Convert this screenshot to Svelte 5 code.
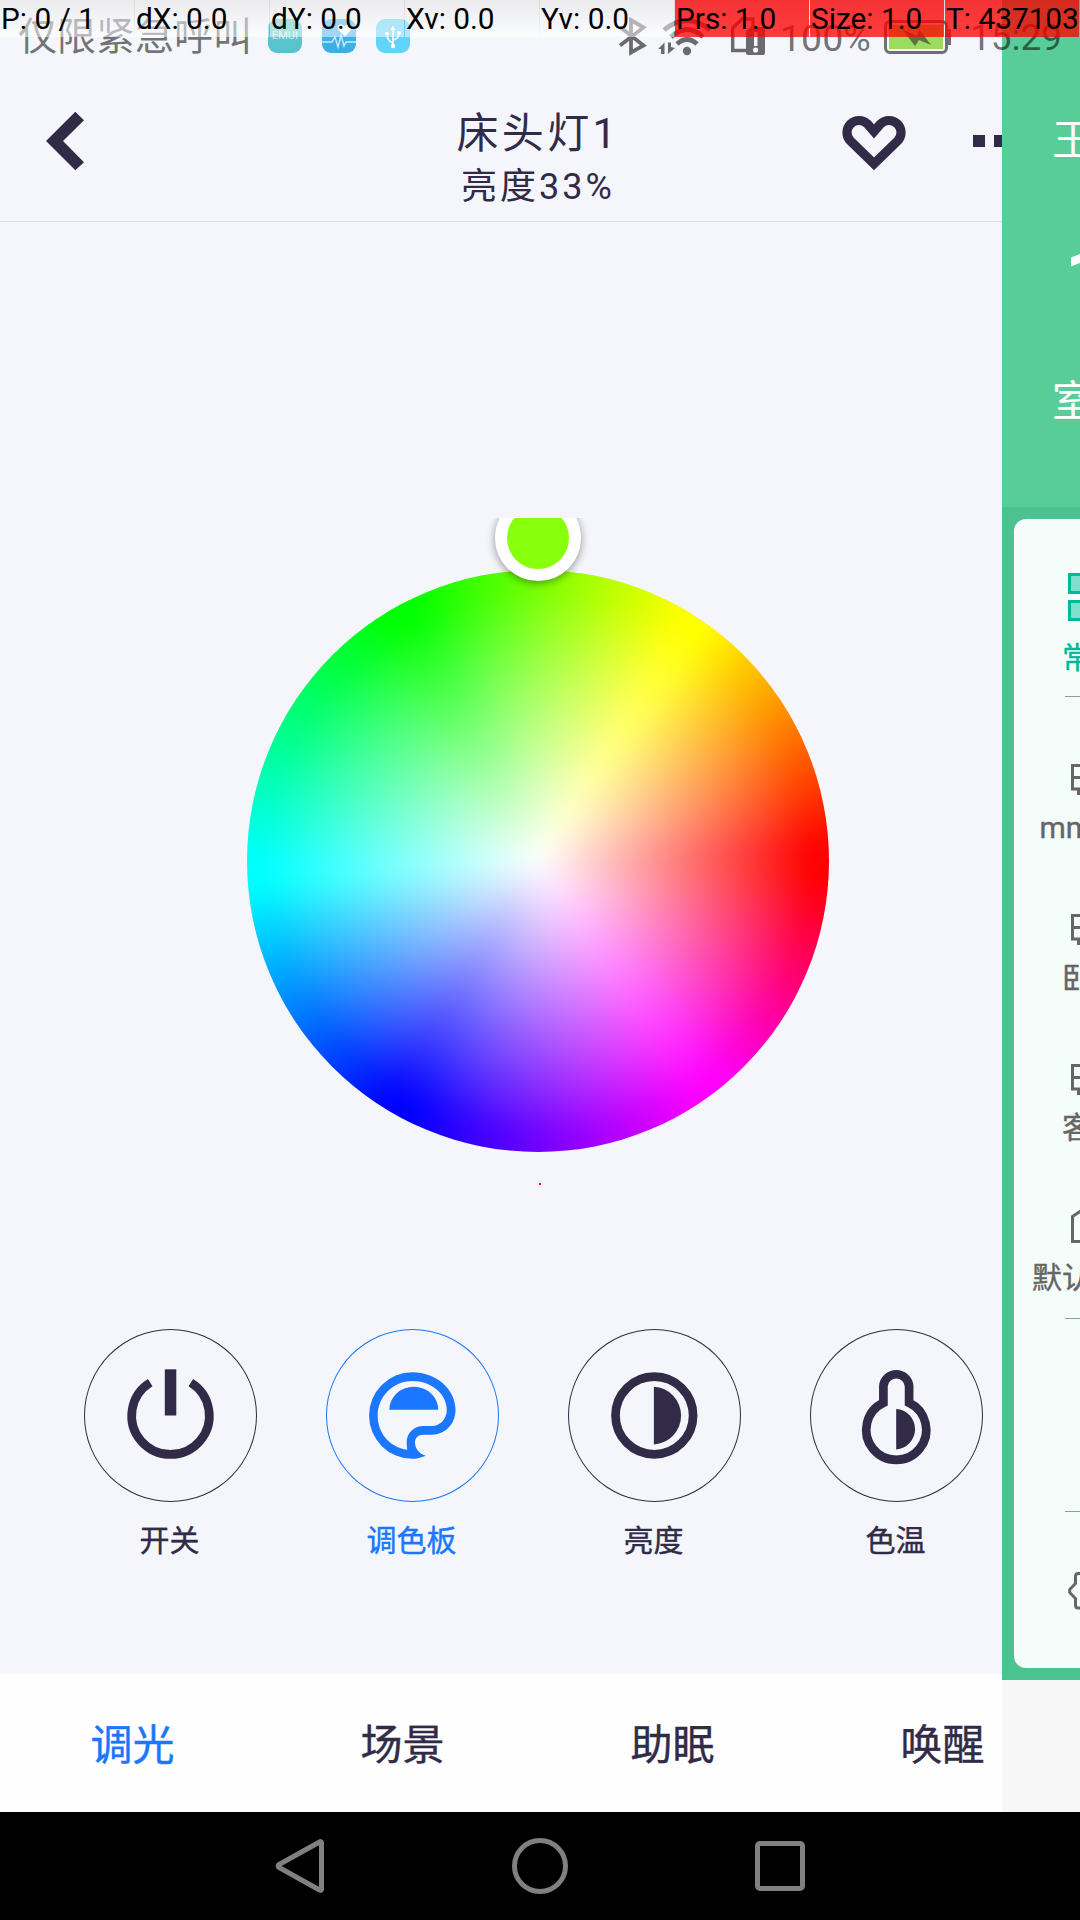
<script>
  const pointer = [
    { text: 'P: 0 / 1' },
    { text: 'dX: 0.0' },
    { text: 'dY: 0.0' },
    { text: 'Xv: 0.0' },
    { text: 'Yv: 0.0' },
    { text: 'Prs: 1.0', full: true },
    { text: 'Size: 1.0', full: true },
    { text: 'T: 437103', full: true }
  ];
  const controls = [
    { id: 'power', label: '开关' },
    { id: 'palette', label: '调色板', active: true },
    { id: 'brightness', label: '亮度' },
    { id: 'temperature', label: '色温' }
  ];
  const tabs = ['调光', '场景', '助眠', '唤醒'];
  const rooms = ['mmmm', '卧室', '客厅'];
</script>

<div class="device">
  <div class="screen">
    <main class="page">
      <header class="header">
        <svg class="back" width="38" height="60" viewBox="0 0 38 60"><path d="M0 30 29.3 .7 38 9.2 17 30 38 51.3 29.3 59.3Z" fill="#312b48" /></svg>
        <div class="titles">
          <h1>床头灯1</h1>
          <p>亮度33%</p>
        </div>
        <svg class="heart" width="64" height="56" viewBox="842 115 64 56"><path d="M874 131.5 867.5 124A12 12 0 0 0 850.5 141L874 163.8 897.5 141A12 12 0 0 0 880.5 124Z" fill="none" stroke="#312b48" stroke-width="9.2" /></svg>
        <div class="more"><i></i><i></i><i></i></div>
      </header>

      <section class="picker">
        <div class="wheel"><div class="hues"></div></div>
        <div class="knob"></div>
        <div class="dot"></div>
      </section>

      <section class="controls">
        {#each controls as c}
          <div class="control" class:active={c.active}>
            <div class="ring">
              <svg width="173" height="173" viewBox="0 0 173 173">
                {#if c.id === 'power'}
                  <path class="line" d="M66.2 53.6A38.8 38.8 0 1 0 106.8 53.6" />
                  <path class="solid" d="M80.8 40.3H92.3V86.5H80.8Z" />
                {:else if c.id === 'palette'}
                  <path class="solid" fill-rule="evenodd" d="M99.7 126.7C95 128.8 90.5 129.8 86.3 129.8A43.2 43.2 0 0 1 86.3 43.3C110 43.3 129.5 60 129.5 81C129.5 95 119 105.7 106 105.7H97C92 105.7 89 109 89 113.5C89 119 93 125 99.7 126.7ZM81.3 120.8C63.5 118 51.7 104 51.7 86.7C51.7 67.6 67 52 86.3 52C105.5 52 120.8 65 120.8 81C120.8 90 114 97 106 97H97C88 97 80.7 104 80.7 113C80.7 116 81 118.5 81.3 120.8Z" />
                  <path class="solid" d="M63.3 80.7A24.5 23 0 0 1 112.3 80.7Z" />
                {:else if c.id === 'brightness'}
                  <circle class="line" cx="86.3" cy="86.5" r="38.8" />
                  <path class="solid" d="M85.9 57.7A28.9 28.9 0 0 1 85.9 115.4Z" />
                {:else}
                  <path class="line" d="M73.4 74.3V57.5A12.9 12.9 0 0 1 99.1 57.5V74.3A30 30 0 1 1 73.4 74.3Z" transform="translate(0 -.5)" />
                  <path class="solid" d="M86.2 79.9A20.3 20.3 0 0 1 86.2 120.4Z" />
                {/if}
              </svg>
            </div>
            <span>{c.label}</span>
          </div>
        {/each}
      </section>

      <nav class="tabs">
        {#each tabs as tab, i}
          <span class:on={i === 0}>{tab}</span>
        {/each}
      </nav>
    </main>

    <aside class="home">
      <div class="weather">
        <span class="city">王</span>
        <span class="temp">1</span>
        <span class="indoor">室</span>
      </div>
      <div class="board">
        <div class="card">
          <div class="room first">
            <svg width="48" height="48" viewBox="0 0 48 48"><g fill="#7fdecd" stroke="#00b99a" stroke-width="3"><path d="M1.5 1.5H19.5V19.5H1.5ZM28.5 1.5H46.5V19.5H28.5ZM1.5 28.5H19.5V46.5H1.5ZM28.5 28.5H46.5V46.5H28.5Z" /></g></svg>
            <b>常用</b>
          </div>
          <hr />
          <div class="rooms">
            {#each rooms as room}
              <div class="room">
                <svg width="42" height="42" viewBox="0 0 42 42"><path d="M1.5 6.5H40.5V30H1.5ZM1.5 18.5H40.5M7.5 30V36M34.5 30V36" fill="none" stroke="#666" stroke-width="3" /></svg>
                <b>{room}</b>
              </div>
            {/each}
            <div class="room">
              <svg class="house" width="42" height="42" viewBox="0 0 42 42"><path d="M1.5 7.5 21 -5.5 40.5 7.5V32.5H1.5Z" fill="none" stroke="#666" stroke-width="3" /></svg>
              <b>默认房间</b>
            </div>
          </div>
          <hr />
          <div class="spacer"></div>
          <hr />
          <svg class="gear" width="48" height="38" viewBox="0 0 48 38"><path d="M24 1.5H10Q7.5 1.5 7.5 4.5V11.5L1.7 17.5V20.5L7.5 26.5V33Q7.5 36 10 36H24" fill="none" stroke="#666" stroke-width="3" /></svg>
        </div>
      </div>
      <div class="blank"></div>
    </aside>
  </div>

  <div class="navbar">
    <svg width="50" height="56" viewBox="0 0 50 56"><path d="M46.5 4.5V51.5Q46 53 44.5 52L4 29.5Q2.2 28 4 26.5L44.5 4Q46 3 46.5 4.5Z" /></svg>
    <svg width="56" height="56" viewBox="0 0 56 56"><circle cx="28" cy="28" r="25.5" /></svg>
    <svg width="50" height="50" viewBox="0 0 50 50"><rect x="2.5" y="2.5" width="45" height="45" rx="2.5" /></svg>
  </div>

  <div class="status">
    <span class="carrier">仅限紧急呼叫</span>
    <div class="apps">
      <span class="app emui">EMUI</span>
      <svg class="app" width="34" height="34" viewBox="0 0 34 34">
        <defs><linearGradient id="blue" x2="0" y2="1"><stop stop-color="#42b3f0" /><stop offset="1" stop-color="#3caee4" /></linearGradient></defs>
        <rect width="34" height="34" rx="9" fill="url(#blue)" />
        <path d="M23 17.5 16.5 11C13.5 7 18.5 3 22.5 7.5C26.5 3 32 7 28.5 11.5Z" fill="#fff" />
        <path d="M0 23H10L13 18 16 28 19 16.5 22 27 24 23H34" fill="none" stroke="#cdeafa" stroke-width="1.4" />
      </svg>
      <svg class="app" width="34" height="34" viewBox="0 0 34 34">
        <rect width="34" height="34" rx="9" fill="#62d4fa" />
        <g fill="none" stroke="#fff" stroke-width="1.5"><path d="M17 27V8M17 24Q11 22 11 15M17 21Q23 20 23 14" /></g>
        <g fill="#fff"><path d="M14.5 11 17 6.5 19.5 11Z" /><circle cx="17" cy="27" r="2.2" /><circle cx="11" cy="14.5" r="1.8" /><path d="M21.3 12.3H24.7V15.7H21.3Z" /></g>
      </svg>
    </div>
    <svg class="radios" width="150" height="40" viewBox="617 17 150 40">
      <g fill="none" stroke="#000" stroke-width="3.8">
        <path d="M620 27 643.5 45.5 631 52.5V20L643.5 27.5 620 45.5" />
        <path d="M664 30Q687 11 710 30" stroke-width="4.6" />
        <path d="M671 37Q687 22 703 37" stroke-width="4.8" />
        <path d="M677 44Q687 35 697 44" stroke-width="5" />
        <path d="M746 50.5H732.7V28L742 19H753V29" stroke-width="3.4" />
      </g>
      <circle cx="687" cy="51" r="4.2" />
      <path d="M658 49 664.5 42.5V54H661V49ZM668 42.5H671V47L675 48 668 54Z" />
      <path fill-rule="evenodd" d="M746 31 751 27H763Q765 27 765 29V53Q765 55 763 55H748Q746 55 746 53ZM754 32V46H757.5V32ZM753 50A2.6 2.6 0 1 0 758.2 50A2.6 2.6 0 1 0 753 50Z" />
    </svg>
    <span class="pct">100%</span>
    <svg class="battery" width="68" height="34" viewBox="0 0 68 34">
      <rect x="1.5" y="1.5" width="61" height="31" rx="4.5" fill="#f5f6fc" stroke="#6f6f6f" stroke-width="3" />
      <path d="M64 9H67V25H64Z" fill="#6f6f6f" />
      <rect x="5" y="5" width="54" height="24" fill="#9bdb5d" />
      <path d="M18 9 33 16 35 9 47 25 35 20 31 26Z" fill="#5d7046" />
    </svg>
    <span class="clock">15:29</span>
  </div>

  <div class="pointer">
    {#each pointer as p}
      <span class:full={p.full}>{p.text}</span>
    {/each}
  </div>
</div>

<style>
  :global(body) { margin: 0; background: #000; }
  .device {
    position: relative;
    width: 1080px;
    height: 1920px;
    overflow: hidden;
    font-family: Roboto, 'Noto Sans CJK SC', sans-serif;
    color: #312b48;
  }
  .screen { display: flex; height: 1812px; }
  .page { width: 1002px; overflow: hidden; background: #f5f6fc; display: flex; flex-direction: column; }

  .header {
    box-sizing: border-box;
    width: 1080px;
    height: 222px;
    flex: none;
    padding: 60px 0 0 46px;
    display: flex;
    align-items: center;
    border-bottom: 1px solid #dcdde3;
  }
  .back { flex: none; }
  .titles { width: 758px; margin: 39px -77px 0 77px; text-align: center; }
  .titles h1 { margin: 0; font-size: 42px; line-height: 54px; font-weight: 400; letter-spacing: 3.4px; padding-right: 4px; }
  .titles p { margin: 0; font-size: 36px; line-height: 52px; letter-spacing: 3px; padding-right: 4px; }
  .heart { flex: none; margin-top: 4px; }
  .more { display: flex; gap: 9px; margin-left: 67px; }
  .more i { width: 12px; height: 12px; background: #312b48; }

  .picker {
    position: relative;
    flex: none;
    width: 686px;
    height: 686px;
    margin: 296px 0 0 195px;
    overflow: hidden;
    display: flex;
    align-items: center;
    justify-content: center;
  }
  .wheel { width: 582px; height: 582px; border-radius: 50%; overflow: hidden; }
  /* Larger than the wheel, so that the softened edge falls outside the clip */
  .hues {
    width: 662px;
    height: 662px;
    margin: -40px;
    filter: blur(11px);
    background:
      radial-gradient(circle 291px, #fff 0%, rgba(255, 255, 255, 0) 94%),
      conic-gradient(from 90deg, #f00 0deg 3deg, #f0f 51deg 56deg, #00f 117deg 122deg, #0ff 175deg 180deg, #0f0 239deg 244deg, #ff0 300deg 306deg, #f00 357deg);
  }
  .knob {
    position: absolute;
    left: 300px;
    top: -23px;
    box-sizing: border-box;
    width: 86px;
    height: 86px;
    border: 12px solid #fff;
    border-radius: 50%;
    background: #88ff0b;
    box-shadow: 0 2px 9px rgba(0, 0, 0, 0.42);
  }
  .dot { position: absolute; left: 344px; top: 665px; width: 2px; height: 2px; background: #f00; }

  .controls { display: flex; gap: 69px; margin: 125px 0 0 84px; width: 996px; flex: none; }
  .control { width: 173px; flex: none; text-align: center; color: #312b48; }
  .control.active { color: #1b77ff; }
  .control span { display: block; margin-top: 17px; padding-right: 2px; font-size: 30px; line-height: 44px; -webkit-text-stroke: 0.4px currentColor; }
  .ring { width: 173px; height: 173px; border-radius: 50%; box-shadow: inset 0 0 0 1px currentColor; }
  .ring svg { display: block; }
  .line { fill: none; stroke: currentColor; stroke-width: 8.7; }
  .solid { fill: currentColor; }

  .tabs { box-sizing: border-box; margin-top: auto; width: 1080px; height: 138px; padding-top: 5px; flex: none; background: #fefefe; display: flex; align-items: center; }
  .tabs span { box-sizing: border-box; width: 270px; padding-right: 5px; text-align: center; font-size: 42px; line-height: 60px; -webkit-text-stroke: 0.4px currentColor; }
  .tabs .on { color: #1b77ff; }

  .home { width: 78px; overflow: hidden; color: #fff; }
  .weather { box-sizing: border-box; height: 507px; padding: 111px 0 0 50px; background: #59cd97; display: flex; flex-direction: column; }
  .weather span { font-size: 42px; line-height: 60px; white-space: nowrap; }
  .weather .temp { font-size: 108px; line-height: 120px; margin: 56px 0 25px 10px; }
  .board { box-sizing: border-box; width: 180px; height: 1173px; padding: 12px; background: #4dc291; }
  .card { width: 156px; height: 1149px; border-radius: 12px; background: #f5fdfa; display: flex; flex-direction: column; align-items: center; color: #666; }
  .blank { height: 132px; background: #f7f7f7; }
  .room { display: flex; flex-direction: column; align-items: center; height: 150px; }
  .room svg { flex: none; }
  .room .house { overflow: visible; }
  .room b { font-weight: 400; font-size: 30px; line-height: 44px; margin-top: 5px; white-space: nowrap; -webkit-text-stroke: 0.4px currentColor; }
  .room.first { height: 123px; padding-top: 54px; color: #00b99a; }
  .room.first b { margin-top: 15px; }
  hr { width: 54px; height: 1px; border: 0; margin: 0; background: #999; flex: none; }
  .rooms { padding-top: 62px; height: 559px; flex: none; }
  .spacer { height: 192px; flex: none; }
  .gear { margin-top: 60px; flex: none; }

  .navbar { height: 108px; background: #000; display: flex; align-items: center; padding-left: 275px; }
  .navbar svg { fill: none; stroke: #808080; stroke-width: 5; margin-right: 187px; }

  .status { position: absolute; inset: 0 0 auto 0; height: 74px; display: flex; align-items: center; }
  .carrier { margin-left: 18px; width: 250px; font-size: 39px; line-height: 60px; color: rgba(0, 0, 0, 0.54); white-space: nowrap; }
  .apps { display: flex; gap: 20px; width: 349px; margin-top: -2px; }
  .app { width: 34px; height: 34px; flex: none; }
  .emui {
    border-radius: 9px;
    background: linear-gradient(#5accc8, #58c0cf);
    color: #fff;
    font: 300 11px/34px Roboto, sans-serif;
    text-align: center;
  }
  .radios { fill: #000; opacity: 0.56; flex: none; }
  .pct { margin-left: 13px; width: 104px; font-size: 37.5px; color: rgba(0, 0, 0, 0.54); flex: none; margin-top: 1px; }
  .battery { flex: none; }
  .clock { margin-left: 18px; font-size: 37px; color: rgba(0, 0, 0, 0.54); margin-top: 1px; }

  .pointer {
    position: absolute;
    inset: 0 0 auto 0;
    height: 37px;
    display: flex;
    color: #000;
    background: linear-gradient(rgba(0, 0, 0, 0.13), rgba(0, 0, 0, 0) 34px);
  }
  .pointer span {
    box-sizing: border-box;
    width: 135px;
    height: 37px;
    padding-left: 1px;
    border-right: 1px solid transparent;
    background: rgba(255, 255, 255, 0.5);
    background-clip: padding-box;
    font-size: 29.8px;
    line-height: 38px;
    white-space: nowrap;
  }
  .pointer .full { background-color: rgba(255, 0, 0, 0.76); }
</style>
